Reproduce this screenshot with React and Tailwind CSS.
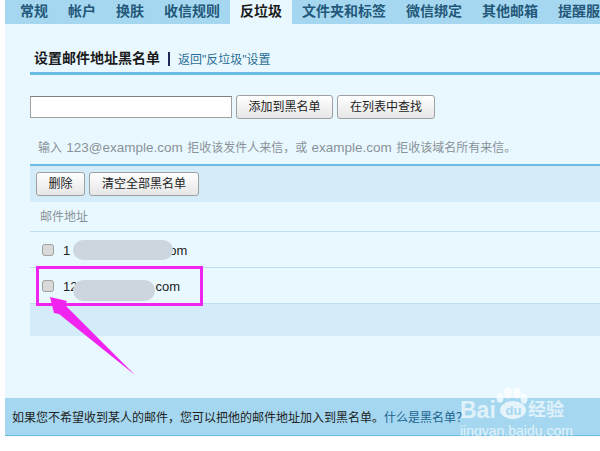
const tabs = ["常规", "帐户", "换肤", "收信规则", "反垃圾", "文件夹和标签", "微信绑定", "其他邮箱", "提醒服"];

function Btn({ children, className = "" }) {
  return (
    <button className={"h-6 rounded-[3px] border border-[#a0a0a0] bg-gradient-to-b from-white to-[#e6e6e6] text-xs text-[#222] " + className}>
      {children}
    </button>
  );
}

function Row({ smear, prefix, suffix, gap }) {
  return (
    <div className="relative flex h-9 items-center border-b border-[#bcdfef] pl-3">
      <div className="h-3 w-3 rounded-[3px] border border-[#a0a0a0] bg-[#d9d9d9]"></div>
      <span className={"mt-[3px] ml-[9px] text-[13px] text-[#222] " + gap}>{prefix}</span>
      <span className="mt-[3px] text-[13px] text-[#222]">{suffix}</span>
      <div className={"absolute rounded-full bg-[#cdd6de] " + smear}></div>
    </div>
  );
}

export default function App() {
  return (
    <div className="relative flex h-[451px] w-[600px] flex-col overflow-hidden bg-white pl-[5px] font-['Liberation_Sans','Noto_Sans_CJK_SC',sans-serif]">
      {/* TABS */}
      <div className="flex h-6 shrink-0 bg-[#a5d8f0] pl-[5px] text-sm font-bold text-[#24587a]">
        {tabs.map((t) => (
          <div
            key={t}
            className={"flex shrink-0 items-center px-2.5 pb-[2px] " + (t === "反垃圾" ? "bg-[#e9f8ff] text-[#1a1a1a]" : "")}
          >
            {t}
          </div>
        ))}
      </div>

      {/* PANEL */}
      <div className="relative flex-1 bg-[#e9f8ff] pl-[25px]">
        <div className="flex h-[51px] items-end border-b-[3px] border-[#6bbce3] pb-[4px] pl-1">
          <h1 className="text-sm font-bold text-[#1a1a1a]">设置邮件地址黑名单</h1>
          <div className="mx-2 mb-[2px] h-3.5 w-[2px] bg-[#1c2a55]"></div>
          <a className="text-xs text-[#2a6d96]">返回"反垃圾"设置</a>
        </div>

        <div className="mt-5 flex items-center gap-1">
          <input className="h-[22px] w-[202px] border border-[#a0a0a0] border-t-[#808080] bg-white" />
          <Btn className="w-[97px]">添加到黑名单</Btn>
          <Btn className="w-[98px]">在列表中查找</Btn>
        </div>

        <p className="mt-5 h-[18px] pl-2 text-xs leading-[18px] whitespace-nowrap text-[#8a9299]">
          输入 <span className="mx-px text-[13.5px]">123@example.com</span> 拒收该发件人来信，或 <span className="mx-px text-[13.5px]">example.com</span> 拒收该域名所有来信。
        </p>

        <div className="mt-[7px] flex h-[38px] items-center gap-1 border-t-2 border-[#6bbce3] bg-[#d4ecf9] pl-1.5">
          <Btn className="w-[49px]">删除</Btn>
          <Btn className="w-[110px]">清空全部黑名单</Btn>
        </div>

        <div className="flex h-[30px] items-center border-b border-[#bcdfef] pl-2.5 text-xs text-[#8a9299]">邮件地址</div>

        <Row prefix="1" suffix="om" gap="mr-[99px]" smear="left-[43px] top-[8px] h-[20px] w-[100px]" />
        <Row prefix="12" suffix="com" gap="mr-[78px]" smear="left-[43px] top-[12px] h-[21px] w-[82px]" />

        <div className="h-8 bg-[#d4ecf9]"></div>

        {/* ANNOTATION */}
        <div className="absolute left-[31px] top-[242px] h-[40px] w-[167px] border-[3px] border-[#f024ee]"></div>
        <svg className="absolute left-[-5px] top-[-24px]" width="600" height="451">
          <polygon points="50,297 67,301 65,305 135,375 59,314 54,313" fill="#f024ee" />
        </svg>
      </div>

      {/* FOOTER */}
      <div className="flex h-[38px] shrink-0 items-center border-b border-[#6bbce3] bg-[#a5d8f0] pt-[2px] pl-[7px] text-xs text-[#222]">
        如果您不希望收到某人的邮件，您可以把他的邮件地址加入到黑名单。
        <a className="text-[#1d6491]">什么是黑名单？</a>
      </div>
      <div className="h-[15px] shrink-0"></div>

      {/* WATERMARK */}
      <svg className="absolute left-0 top-0" width="600" height="451">
        <g fill="#ffffff" fillOpacity="0.72">
          <ellipse cx="500" cy="398" rx="3.5" ry="5" />
          <ellipse cx="508" cy="393" rx="4" ry="5.5" />
          <ellipse cx="517" cy="393" rx="4" ry="5.5" />
          <ellipse cx="524" cy="399" rx="3.5" ry="5" />
          <ellipse cx="513" cy="410" rx="13" ry="9" />
        </g>
      </svg>
      <div className="absolute left-[460px] top-[399px] flex w-[110px] flex-col text-white/65">
        <div className="flex h-[22px] items-center text-[23px] leading-none font-bold">
          <span className="w-[40px]">Bai</span>
          <span className="flex w-[27px] justify-center text-[13px] font-bold text-[#a5d8f0]">du</span>
          <span className="ml-px text-[18px] leading-none font-bold">经验</span>
        </div>
        <div className="mt-[2px] text-[14px] leading-4 whitespace-nowrap">jingyan.baidu.com</div>
      </div>
    </div>
  );
}
